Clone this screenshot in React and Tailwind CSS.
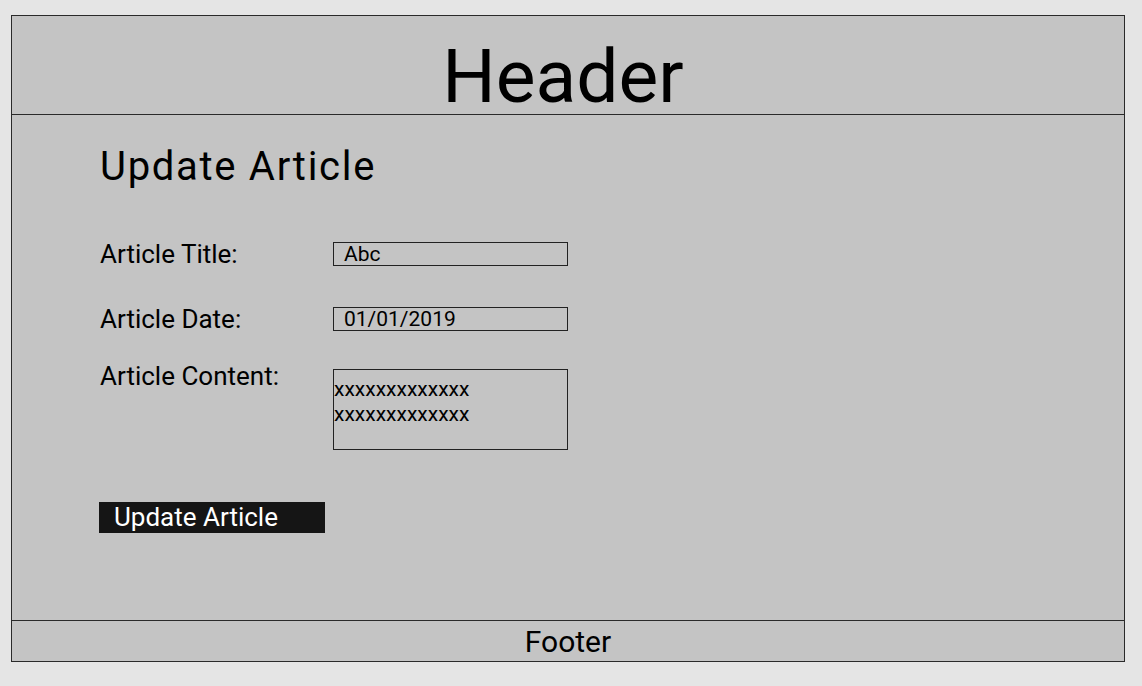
export default function App() {
  return (
    <div className="min-h-[686px] w-[1142px] bg-[#e5e5e5] pt-[15px] pl-[11px]" style={{ fontFamily: "Roboto, 'Liberation Sans', sans-serif" }}>
      <div className="w-[1114px] h-[647px] border border-[#2a2a2a] bg-[#c4c4c4] flex flex-col">
        <div className="h-[99px] shrink-0 border-b border-[#2a2a2a] flex justify-center pt-[23px] pr-[10px]">
          <span className="text-[75px] leading-none text-black">Header</span>
        </div>
        <div className="flex-1 pl-[88px] pt-[28px]">
          <h1 className="text-[40px] leading-[48px] tracking-[1.7px] text-black">Update Article</h1>
          <div className="mt-[50px] flex items-start">
            <span className="w-[233px] text-[26px] leading-[26px] text-black">Article Title:</span>
            <div className="mt-[1px] w-[235px] h-[24px] border border-[#222] text-[21px] leading-[22px] pl-[10px] text-black">Abc</div>
          </div>
          <div className="mt-[39px] flex items-start">
            <span className="w-[233px] text-[26px] leading-[26px] text-black">Article Date:</span>
            <div className="mt-[1px] w-[235px] h-[24px] border border-[#222] text-[21px] leading-[22px] pl-[10px] text-black">01/01/2019</div>
          </div>
          <div className="mt-[31px] flex items-start">
            <span className="w-[233px] text-[26px] leading-[26px] text-black">Article Content:</span>
            <div className="mt-[6px] w-[235px] h-[81px] border border-[#222] text-[21px] leading-[25px] pt-[7px] text-black">
              <div>xxxxxxxxxxxxx</div>
              <div>xxxxxxxxxxxxx</div>
            </div>
          </div>
          <div className="mt-[52px] -ml-[1px] w-[226px] h-[31px] bg-[#151515] text-white text-[26px] leading-[31px] pl-[15px]">Update Article</div>
        </div>
        <div className="h-[41px] shrink-0 border-t border-[#2a2a2a] flex justify-center pt-[6px]">
          <span className="text-[30px] leading-none text-black">Footer</span>
        </div>
      </div>
    </div>
  );
}
